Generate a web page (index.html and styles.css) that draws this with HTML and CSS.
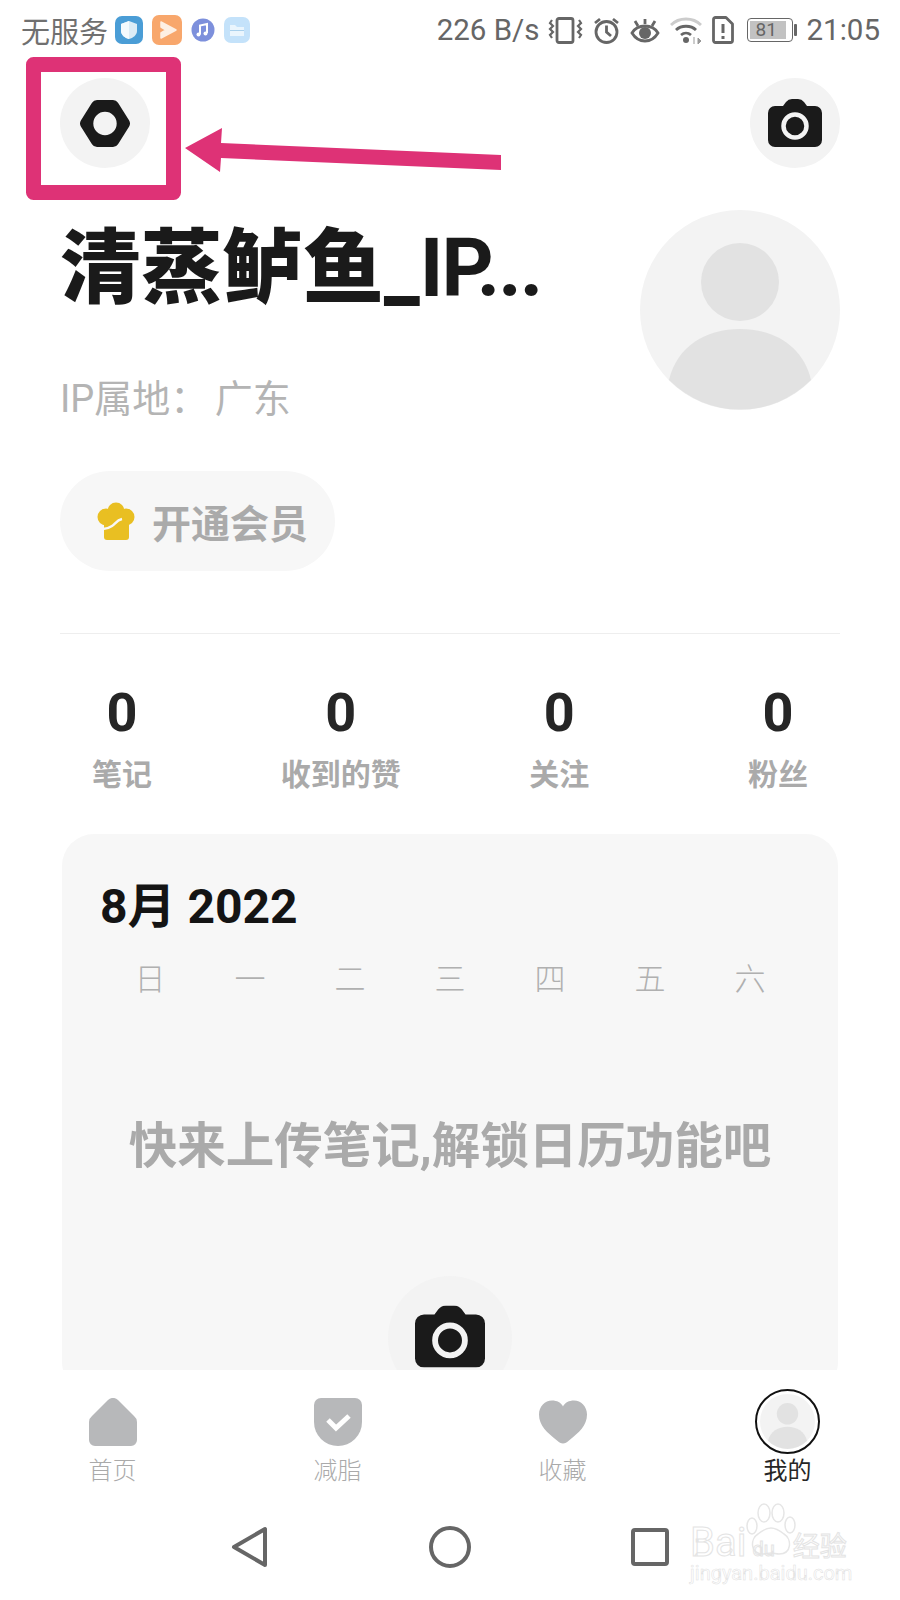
FILE: index.html
```html
<!doctype html>
<html>
<head>
<meta charset="UTF-8">
<title>我的</title>
<link rel="stylesheet" href="styles.css">
</head>
<body>
<div class="status">
  <div class="status-left">
    <span class="carrier">无服务</span>
    <svg class="app-icon" width="28" height="28" viewBox="0 0 28 28"><rect width="28" height="28" rx="7" fill="#4a9dd6"/><path d="M14 5l8 3v7c0 4-4 7-8 8-4-1-8-4-8-8V8z" fill="#dcecf6"/><path d="M14 5v18c-4-1-8-4-8-8V8z" fill="#f4fafd"/></svg>
    <svg class="app-icon" width="30" height="30" viewBox="0 0 30 30"><rect width="30" height="30" rx="7" fill="#f8a76c"/><path d="M9 7l15 8-15 8v-5l5-3-5-3z" fill="#fdf0e4" stroke="#fdf0e4" stroke-width="1.500" stroke-linejoin="round"/></svg>
    <svg class="app-icon" width="24" height="24" viewBox="0 0 24 24"><circle cx="12" cy="12" r="11.5" fill="#7d90dc"/><path d="M9 16.500V7.500l7-1.500v9" fill="none" stroke="#fff" stroke-width="2"/><circle cx="7.500" cy="16.500" r="2" fill="#fff"/><circle cx="14.500" cy="15.500" r="2" fill="#fff"/></svg>
    <svg class="app-icon" width="26" height="26" viewBox="0 0 26 26"><rect width="26" height="26" rx="7" fill="#c4e2fa"/><path d="M6 8h5l2 2h7v9H6z" fill="#eaf5fd"/><path d="M6 13h14v1H6z" fill="#a9d0ec"/></svg>
  </div>
  <div class="status-right">
    <span class="speed">226 B/s</span>
    <svg width="35" height="27" viewBox="0 0 35 27" fill="none" stroke="#666" stroke-width="2.8"><rect x="9" y="1.5" width="16" height="24" rx="2"/><path d="M4 3l-2 3 3 3-3 3 3 3-3 3 2 3M31 3l2 3-3 3 3 3-3 3 3 3-2 3" stroke-width="2.2"/></svg>
    <svg width="27" height="27" viewBox="0 0 27 27" fill="none" stroke="#666" stroke-width="2.8"><circle cx="13.5" cy="15" r="10.5"/><path d="M13.5 8.5V15l4.5 4M2 6l5-4M25 6l-5-4"/></svg>
    <svg width="30" height="25" viewBox="0 0 30 25"><path d="M2 15c3-5 8-7 13-7s10 2 13 7c-3 5-8 8-13 8s-10-3-13-8z" fill="none" stroke="#666" stroke-width="2.8"/><circle cx="15" cy="15" r="6" fill="#666"/><path d="M15 1v5M5 3l3 5M25 3l-3 5" stroke="#666" stroke-width="2.8"/></svg>
    <svg width="32" height="27" viewBox="0 0 32 27" fill="none" stroke-width="2.8"><path d="M1 8c8-8 22-8 30 0" stroke="#ccc"/><path d="M6 13c5-5 15-5 20 0M11 18c3-2.500 7-2.500 10 0" stroke="#666"/><circle cx="16" cy="23" r="3" fill="#666"/><path d="M24 20v7M28 21l3 3-3 3z" fill="#999" stroke="#999" stroke-width="1"/></svg>
    <svg width="22" height="28" viewBox="0 0 22 28" fill="none" stroke="#666" stroke-width="2.8"><path d="M4 1.500h10l6.500 6.500v16.500a2 2 0 0 1-2 2h-15a2 2 0 0 1-2-2v-21a2 2 0 0 1 2-2z" stroke-linejoin="round"/><path d="M11 8v9M11 20v3" stroke-width="3"/></svg>
    <div class="battery"><div class="battery-body"><span class="battery-fill"></span><span class="battery-num">81</span></div><span class="battery-cap"></span></div>
    <span class="clock">21:05</span>
  </div>
</div>

<div class="content">
  <div class="topbar">
    <div class="round-btn">
      <svg width="50" height="47" viewBox="0 0 50 47"><path fill-rule="evenodd" d="M17 0h16a6 6 0 0 1 5 2.800l11 17.500a6 6 0 0 1 0 6.400l-11 17.500a6 6 0 0 1-5 2.800H17a6 6 0 0 1-5-2.800l-11-17.500a6 6 0 0 1 0-6.400l11-17.500A6 6 0 0 1 17 0zM25 11.800a11.700 11.700 0 1 0 0 23.400 11.700 11.700 0 0 0 0-23.400z" fill="#1a1a1a"/></svg>
    </div>
    <div class="round-btn">
      <svg width="54" height="48" viewBox="0 0 54 48"><use href="#camera"/></svg>
    </div>
  </div>

  <div class="profile">
    <div class="profile-info">
      <h1 class="name">清蒸鲈鱼_<span class="name-tail">IP...</span></h1>
      <div class="location">IP属地： 广东</div>
      <div class="vip">
        <svg width="38" height="38" viewBox="0 0 38 38" fill="#e9bf22"><circle cx="9" cy="15" r="8.500"/><circle cx="19" cy="9" r="8.500"/><circle cx="29" cy="15" r="8.500"/><path d="M7 16h25v19a3 3 0 0 1-3 3H10a3 3 0 0 1-3-3z"/><path d="M6 27c4 0 6-1 9-3 3-2 5-6 10-7" fill="none" stroke="#f7f7f7" stroke-width="2.500"/></svg>
        <span>开通会员</span>
      </div>
    </div>
    <svg class="avatar" width="200" height="200" viewBox="0 0 200 200"><circle cx="100" cy="100" r="100" fill="#f3f3f3"/><circle cx="100" cy="72" r="39" fill="#e2e2e2"/><path d="M29 170c8-34 37-51 71-51s63 17 71 51a100 100 0 0 1-142 0z" fill="#e2e2e2"/></svg>
  </div>

  <div class="divider"></div>

  <div class="stats">
    <div class="stat"><b>0</b><span>笔记</span></div>
    <div class="stat"><b>0</b><span>收到的赞</span></div>
    <div class="stat"><b>0</b><span>关注</span></div>
    <div class="stat"><b>0</b><span>粉丝</span></div>
  </div>

  <div class="calendar">
    <div class="month">8月 2022</div>
    <div class="weekdays">
      <span>日</span><span>一</span><span>二</span><span>三</span><span>四</span><span>五</span><span>六</span>
    </div>
    <div class="empty-msg">快来上传笔记,解锁日历功能吧</div>
    <div class="upload">
      <svg width="70" height="63" viewBox="0 0 54 48"><use href="#camera"/></svg>
    </div>
  </div>
</div>

<div class="tabbar">
  <div class="tab">
    <svg width="48" height="48" viewBox="0 0 48 48"><path d="M19 2a7 7 0 0 1 10 0l16 16a8 8 0 0 1 3 6v18a6 6 0 0 1-6 6H6a6 6 0 0 1-6-6V24a8 8 0 0 1 3-6z" fill="#b7b8ba"/></svg>
    <span>首页</span>
  </div>
  <div class="tab">
    <svg width="48" height="48" viewBox="0 0 48 48"><path d="M7 0h34a7 7 0 0 1 7 7v17a24 24 0 0 1-48 0V7a7 7 0 0 1 7-7z" fill="#b7b8ba"/><path d="M14 22l8 8 13-12" fill="none" stroke="#fff" stroke-width="5"/></svg>
    <span>减脂</span>
  </div>
  <div class="tab">
    <svg width="48" height="48" viewBox="0 0 48 43"><path d="M24 43c-2 0-4-1-6-3C8 32 0 25 0 14 0 6 6 0 13 0c5 0 9 2 11 6 2-4 6-6 11-6 7 0 13 6 13 14 0 11-8 18-18 26-2 2-4 3-6 3z" fill="#b7b8ba"/></svg>
    <span>收藏</span>
  </div>
  <div class="tab tab-active">
    <div class="tab-avatar">
      <svg width="55" height="55" viewBox="0 0 200 200"><circle cx="100" cy="100" r="100" fill="#f3f3f3"/><circle cx="100" cy="72" r="39" fill="#e2e2e2"/><path d="M29 170c8-34 37-51 71-51s63 17 71 51a100 100 0 0 1-142 0z" fill="#e2e2e2"/></svg>
    </div>
    <span>我的</span>
  </div>
</div>

<div class="navbar">
  <svg width="38" height="42" viewBox="0 0 38 42" fill="none" stroke="#666" stroke-width="4" stroke-linejoin="round"><path d="M34 3v36L3 21z"/></svg>
  <svg width="42" height="42" viewBox="0 0 42 42" fill="none" stroke="#666" stroke-width="4"><circle cx="21" cy="21" r="19"/></svg>
  <svg width="38" height="38" viewBox="0 0 38 38" fill="none" stroke="#666" stroke-width="4" stroke-linejoin="round"><rect x="2" y="2" width="34" height="34" rx="2"/></svg>
</div>

<!-- annotation drawn over the shot -->
<svg class="annotation" width="520" height="210" viewBox="0 0 520 210">
  <rect x="33.500" y="64.500" width="140" height="128" fill="none" stroke="#de3276" stroke-width="15" stroke-linejoin="round"/>
  <path d="M185 148l37-20-1 15 280 12v15l-280-12-1 14z" fill="#de3276"/>
</svg>

<div class="watermark">
  <svg class="paw" width="52" height="52" viewBox="0 0 52 52" fill="none" stroke="#e6e6e6" stroke-width="1.500"><ellipse cx="7" cy="23" rx="5" ry="8"/><ellipse cx="19" cy="10" rx="6" ry="9"/><ellipse cx="33" cy="10" rx="6" ry="9"/><ellipse cx="45" cy="22" rx="5" ry="8"/><path d="M26 25c5 0 8 2 13 6 8 5 8 20-5 20-3 0-5-1-8-1s-5 1-8 1C5 51 5 36 13 31c5-4 8-6 13-6z"/></svg>
  <div class="wm-line"><span>Bai</span><span class="wm-du">du</span><span class="wm-cn">经验</span></div>
  <div class="wm-url">jingyan.baidu.com</div>
</div>

<svg class="defs" width="0" height="0">
  <symbol id="camera" viewBox="0 0 54 48">
    <path d="M7 7h8l3-4a8 8 0 0 1 6-3h6a8 8 0 0 1 6 3l3 4h8a7 7 0 0 1 7 7v27a7 7 0 0 1-7 7H7a7 7 0 0 1-7-7V14a7 7 0 0 1 7-7z" fill="#1a1a1a"/>
    <circle cx="27" cy="27" r="11.500" fill="none" stroke="#f3f3f3" stroke-width="4.500"/>
  </symbol>
</svg>
</body>
</html>
```

FILE: styles.css
```css
* { box-sizing: border-box; }
html, body { margin: 0; padding: 0; }
body { position: relative; width: 900px; height: 1600px; overflow: hidden; background: #fff; display: flex; flex-direction: column; font-family: "Roboto", "Noto Sans CJK SC", sans-serif; color: #1a1a1a; }
svg { display: block; flex: none; }
.defs { position: absolute; }

.status { height: 57px; padding: 3px 20px 0 21px; display: flex; justify-content: space-between; align-items: center; color: #666; font-size: 29.500px; flex: none; }
.status-left { display: flex; align-items: center; }
.carrier { font-weight: 400; margin-right: 7px; font-size: 29px; color: #707070; }
.app-icon { margin-right: 9px; }
.status-right { display: flex; align-items: center; gap: 10px; }
.speed { margin-right: -2px; }
.battery { display: flex; align-items: center; gap: 1px; margin-left: 3px; }
.battery-body { position: relative; width: 46px; height: 24px; border: 1.500px solid #666; border-radius: 4px; padding: 2px; }
.battery-fill { display: block; width: 36px; height: 100%; background: #c2c2c2; }
.battery-num { position: absolute; left: 8px; top: 1px; font-size: 19px; line-height: 20px; }
.battery-cap { width: 3px; height: 12px; background: #666; border-radius: 1px; }

.content { flex: 1; min-height: 0; overflow: hidden; padding: 21px 60px 0; }
.topbar { display: flex; justify-content: space-between; }
.round-btn { width: 90px; height: 90px; border-radius: 50%; background: #f3f3f3; display: flex; align-items: center; justify-content: center; }

.profile { display: flex; justify-content: space-between; margin-top: 42px; }
.name { margin: 7px 0 0; font-size: 81px; line-height: 104px; font-weight: 900; white-space: nowrap; }
.name-tail { font-weight: 700; letter-spacing: -2px; }
.location { margin-top: 53px; font-size: 38px; line-height: 50px; font-weight: 400; word-spacing: -3px; color: #b4b4b4; }
.vip { margin-top: 47px; width: 275px; height: 100px; border-radius: 50px; background: #f7f7f7; display: flex; align-items: center; gap: 17px; padding-left: 37px; }
.vip span { font-size: 39px; font-weight: 700; color: #aaa; }

.divider { margin-top: 62px; height: 1px; background: #eee; }

.stats { display: flex; justify-content: space-between; margin-top: 47px; padding: 0 2px; }
.stat { width: 120px; display: flex; flex-direction: column; align-items: center; white-space: nowrap; }
.stat b { font-size: 54px; line-height: 64px; font-weight: 700; color: #262626; }
.stat span { font-size: 30px; line-height: 40px; font-weight: 700; color: #aaa; margin-top: 10px; }

.calendar { margin: 39px 2px 0; height: 560px; border-radius: 32px; background: #f7f7f7; padding: 42px 38px 0; text-align: center; }
.month { font-size: 48px; line-height: 62px; font-weight: 700; text-align: left; color: #141414; }
.weekdays { display: grid; grid-template-columns: repeat(7, 100px); margin: 20px 0 0 0; font-size: 31px; line-height: 44px; font-weight: 300; color: #b0b0b0; justify-content: center; }
.empty-msg { margin: 113px -38px 0; font-size: 48.500px; line-height: 64px; font-weight: 700; color: #aaa; white-space: nowrap; }
.upload { width: 124px; height: 124px; margin: 97px auto 0; padding-bottom: 4px; border-radius: 50%; background: #f3f3f3; display: flex; align-items: center; justify-content: center; }

.tabbar { height: 130px; flex: none; background: #fff; display: grid; grid-template-columns: repeat(4, 225px); padding-left: 0; }
.tab { display: flex; flex-direction: column; align-items: center; justify-content: flex-end; padding-bottom: 12px; font-size: 24px; line-height: 34px; font-weight: 300; color: #aaa; }
.tab svg { margin-bottom: 8px; }
.tab-active { color: #262626; font-weight: 400; }
.tab-avatar { width: 65px; height: 65px; border: 2px solid #111; border-radius: 50%; padding: 3px; }
.tab-avatar svg { margin: 0; }
.navbar { height: 100px; flex: none; display: grid; grid-template-columns: repeat(3, 200px); justify-content: center; justify-items: center; align-items: center; padding-bottom: 6px; }

.annotation { position: absolute; left: 0; top: 0; }

.watermark { position: absolute; left: 690px; top: 1503px; width: 165px; height: 82px; color: transparent; -webkit-text-stroke: 1px #e4e4e4; }
.paw { position: absolute; left: 55px; top: 0; }
.wm-line { position: absolute; left: 0; top: 22px; width: 100%; display: flex; align-items: baseline; font-size: 40px; line-height: 36px; }
.wm-du { font-size: 20px; margin: 0 18px 0 6px; }
.wm-cn { font-size: 27px; }
.wm-url { position: absolute; left: 0; top: 60px; font-size: 20px; line-height: 20px; -webkit-text-stroke: 0.500px #e0e0e0; white-space: nowrap; }
```
